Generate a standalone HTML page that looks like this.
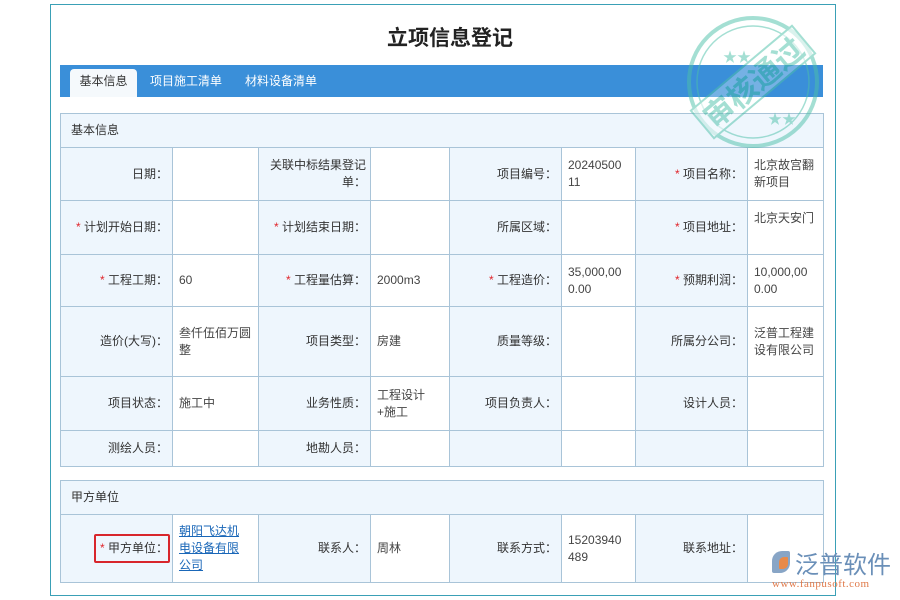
<!DOCTYPE html>
<html><head><meta charset="utf-8"><style>
*{margin:0;padding:0;box-sizing:border-box}
body{width:900px;height:600px;background:#fff;position:relative;overflow:hidden;font-family:"Liberation Sans","Noto Sans CJK SC",sans-serif;font-size:12px;color:#333}
.frame{position:absolute;left:50px;top:4px;width:786px;height:592px;border:1px solid #3aa0b6}
h1{position:absolute;left:0;width:900px;top:22px;text-align:center;font-size:21px;font-weight:bold;color:#222}
.bar{position:absolute;left:60px;top:65px;width:763px;height:32px;background:#3a8fd9}
.tab{position:absolute;top:4px;height:28px;line-height:24px;color:#fff;font-size:12px}
.tab.on{background:#f5f9fc;color:#333;border-radius:4px 4px 0 0;left:10px;width:67px;text-align:center}
table{position:absolute;left:60px;width:763px;border-collapse:collapse;table-layout:fixed}
td{border:1px solid #a9c4d8;vertical-align:middle;line-height:17px;padding:0 8px;white-space:nowrap}
td.l{background:#eef6fd;text-align:right;padding-right:4px}
td.v{background:#fff;padding-left:6px;padding-right:0;color:#444}
td.h{background:#eef6fd;padding-left:10px;height:34px}
.s{color:#e0262c}
a{color:#1a67b8;text-decoration:underline}
.box{border:2px solid #d8262c;border-radius:2px;padding:4px 0 4px 4px;display:inline-block;margin-right:-2px}
</style></head><body>
<div class="frame"></div>
<h1>立项信息登记</h1>
<div class="bar"><div class="tab on">基本信息</div><div class="tab" style="left:90px">项目施工清单</div><div class="tab" style="left:185px">材料设备清单</div></div>
<table style="top:113px">
<colgroup><col style="width:112px"><col style="width:86px"><col style="width:112px"><col style="width:79px"><col style="width:112px"><col style="width:74px"><col style="width:112px"><col style="width:76px"></colgroup>
<tr><td class="h" colspan="8">基本信息</td></tr>
<tr style="height:53px"><td class="l">日期：</td><td class="v"></td><td class="l">关联中标结果登记<br>单：</td><td class="v"></td><td class="l">项目编号：</td><td class="v">20240500<br>11</td><td class="l"><span class="s">*</span> 项目名称：</td><td class="v">北京故宫翻<br>新项目</td></tr>
<tr style="height:54px"><td class="l"><span class="s">*</span> 计划开始日期：</td><td class="v"></td><td class="l"><span class="s">*</span> 计划结束日期：</td><td class="v"></td><td class="l">所属区域：</td><td class="v"></td><td class="l"><span class="s">*</span> 项目地址：</td><td class="v" style="padding-bottom:18px">北京天安门</td></tr>
<tr style="height:52px"><td class="l"><span class="s">*</span> 工程工期：</td><td class="v">60</td><td class="l"><span class="s">*</span> 工程量估算：</td><td class="v">2000m3</td><td class="l"><span class="s">*</span> 工程造价：</td><td class="v">35,000,00<br>0.00</td><td class="l"><span class="s">*</span> 预期利润：</td><td class="v">10,000,00<br>0.00</td></tr>
<tr style="height:70px"><td class="l">造价(大写)：</td><td class="v">叁仟伍佰万圆<br>整</td><td class="l">项目类型：</td><td class="v">房建</td><td class="l">质量等级：</td><td class="v"></td><td class="l">所属分公司：</td><td class="v">泛普工程建<br>设有限公司</td></tr>
<tr style="height:54px"><td class="l">项目状态：</td><td class="v">施工中</td><td class="l">业务性质：</td><td class="v">工程设计<br>+施工</td><td class="l">项目负责人：</td><td class="v"></td><td class="l">设计人员：</td><td class="v"></td></tr>
<tr style="height:36px"><td class="l">测绘人员：</td><td class="v"></td><td class="l">地勘人员：</td><td class="v"></td><td class="l"></td><td class="v"></td><td class="l"></td><td class="v"></td></tr>
</table>
<table style="top:480px">
<colgroup><col style="width:112px"><col style="width:86px"><col style="width:112px"><col style="width:79px"><col style="width:112px"><col style="width:74px"><col style="width:112px"><col style="width:76px"></colgroup>
<tr><td class="h" colspan="8">甲方单位</td></tr>
<tr style="height:68px"><td class="l"><span class="box"><span class="s">*</span> 甲方单位：</span></td><td class="v"><a>朝阳飞达机</a><br><a>电设备有限</a><br><a>公司</a></td><td class="l">联系人：</td><td class="v">周林</td><td class="l">联系方式：</td><td class="v">15203940<br>489</td><td class="l">联系地址：</td><td class="v"></td></tr>
</table>
<svg style="position:absolute;left:683px;top:12px" width="140" height="140" viewBox="0 0 140 140" opacity="0.5">
<circle cx="70" cy="70" r="64" fill="none" stroke="#4cc0a8" stroke-width="4"/>
<circle cx="70" cy="70" r="56" fill="none" stroke="#4cc0a8" stroke-width="1.5"/>
<g transform="rotate(-40 70 70)"><rect x="4" y="52" width="132" height="36" fill="#fff" fill-opacity="0.6" stroke="#4cc0a8" stroke-width="2"/>
<text x="70" y="82" text-anchor="middle" font-size="30" font-weight="bold" fill="#4cc0a8" font-family="Noto Sans CJK SC,sans-serif">审核通过</text></g>
<text x="40" y="50" font-size="14" fill="#4cc0a8">★★</text><text x="85" y="112" font-size="14" fill="#4cc0a8">★★</text>
</svg>
<div style="position:absolute;left:772px;top:551px;width:18px;height:22px;background:#6a8fb8;border-radius:10px 2px 10px 2px;opacity:.8"></div>
<div style="position:absolute;left:779px;top:557px;width:9px;height:12px;background:#e88a4a;border-radius:5px 1px"></div>
<div style="position:absolute;left:795px;top:550px;font-size:24px;color:#6a8fb8;font-family:'Noto Sans CJK SC',sans-serif;line-height:26px">泛普软件</div>
<div style="position:absolute;left:772px;top:578px;font-size:11px;color:#e07a4a;font-family:'Liberation Serif',serif;letter-spacing:.5px">www.fanpusoft.com</div>
</body></html>
